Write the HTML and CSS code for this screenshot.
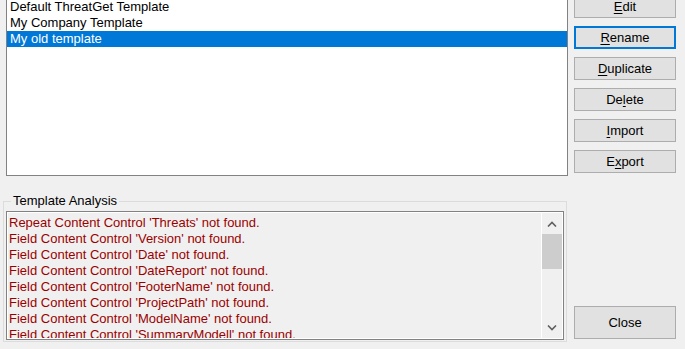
FILE: index.html
```html
<!DOCTYPE html>
<html lang="en">

<head>
   <meta charset="utf-8" />
   <title>Manage Templates</title>
   <link rel="stylesheet" href="styles.css">
</head>

<body>
   <div class="dialog">
      <div class="top-row">
         <div class="listbox">
            <div class="item">Default ThreatGet Template</div>
            <div class="item">My Company Template</div>
            <div class="item selected">My old template</div>
         </div>
         <div class="buttons">
            <button class="btn"><u>E</u>dit</button>
            <button class="btn focused"><u>R</u>ename</button>
            <button class="btn"><u>D</u>uplicate</button>
            <button class="btn">De<u>l</u>ete</button>
            <button class="btn"><u>I</u>mport</button>
            <button class="btn">E<u>x</u>port</button>
         </div>
      </div>
      <div class="bottom-row">
         <fieldset class="group">
            <legend>Template Analysis</legend>
            <div class="textbox">
               <div class="lines">
                  <div>Repeat Content Control 'Threats' not found.</div>
                  <div>Field Content Control 'Version' not found.</div>
                  <div>Field Content Control 'Date' not found.</div>
                  <div>Field Content Control 'DateReport' not found.</div>
                  <div>Field Content Control 'FooterName' not found.</div>
                  <div>Field Content Control 'ProjectPath' not found.</div>
                  <div>Field Content Control 'ModelName' not found.</div>
                  <div>Field Content Control 'SummaryModell' not found.</div>
               </div>
               <div class="scrollbar">
                  <div class="arrow">
                     <svg width="10" height="6" viewBox="0 0 10 6"><path d="M1 5.5 L5 1.5 L9 5.5" fill="none" stroke="#606060" stroke-width="1.6"/></svg>
                  </div>
                  <div class="thumb"></div>
                  <div class="track"></div>
                  <div class="arrow">
                     <svg width="10" height="6" viewBox="0 0 10 6"><path d="M1 0.5 L5 4.5 L9 0.5" fill="none" stroke="#606060" stroke-width="1.6"/></svg>
                  </div>
               </div>
            </div>
         </fieldset>
         <div class="close-col">
            <button class="btn close">Close</button>
         </div>
      </div>
   </div>
</body>

</html>
```

FILE: styles.css
```css
* {
   box-sizing: border-box
}

html,
body {
   margin: 0;
   padding: 0;
   overflow: hidden;
}

body {
   background: #f0f0f0;
   color: #000;
   font-family: "Liberation Sans", Arial, sans-serif;
   font-size: 13px;
}

.dialog {
   margin-top: -5px;
   width: 685px;
}

.top-row {
   display: flex;
   align-items: flex-start;
}

.listbox {
   margin-left: 6px;
   width: 562px;
   height: 181px;
   background: #fff;
   border: 1px solid #828282;
   padding: 3px 0 0 0;
}

.item {
   height: 16px;
   line-height: 16px;
   padding-left: 3px;
   white-space: nowrap;
}

.item.selected {
   background: #0078d7;
   color: #fff;
}

.buttons {
   margin-left: 6px;
   width: 102px;
   display: flex;
   flex-direction: column;
   gap: 8px;
}

.btn {
   display: block;
   width: 102px;
   height: 23px;
   padding: 0;
   margin: 0;
   background: #e1e1e1;
   border: 1px solid #adadad;
   font-family: inherit;
   font-size: inherit;
   color: #000;
   line-height: 20px;
}

.btn u {
   text-decoration-thickness: 1px;
   text-underline-offset: 2px;
}

.btn.focused {
   border: 2px solid #0078d7;
}

.bottom-row {
   display: flex;
   margin-top: 18px;
}

.group {
   margin: 0 0 0 3px;
   width: 564px;
   padding: 3px 2px 1px 2px;
   border: 1px solid #dcdcdc;
   min-width: 0;
}

.group legend {
   margin-left: 5px;
   padding: 0 2px;
   line-height: 14px;
   height: 14px;
}

.textbox {
   display: flex;
   height: 129px;
   border: 1px solid #828282;
   box-shadow: inset 0 0 0 1px #fff;
   padding: 1px;
   background: #f0f0f0;
   overflow: hidden;
}

.lines {
   flex: 1;
   padding: 2px 0 0 1px;
   color: #9b0000;
   overflow: hidden;
}

.lines div {
   height: 16px;
   line-height: 16px;
   white-space: nowrap;
}

.scrollbar {
   width: 21px;
   border-left: 1px solid #fff;
   display: flex;
   flex-direction: column;
}

.arrow {
   height: 21px;
   display: flex;
   align-items: center;
   justify-content: center;
}

.thumb {
   height: 35px;
   background: #cdcdcd;
}

.track {
   flex: 1;
}

.close-col {
   margin-left: 7px;
   display: flex;
   align-items: flex-end;
   padding-bottom: 3px;
}

.btn.close {
   height: 33px;
   line-height: 30px;
}
```
